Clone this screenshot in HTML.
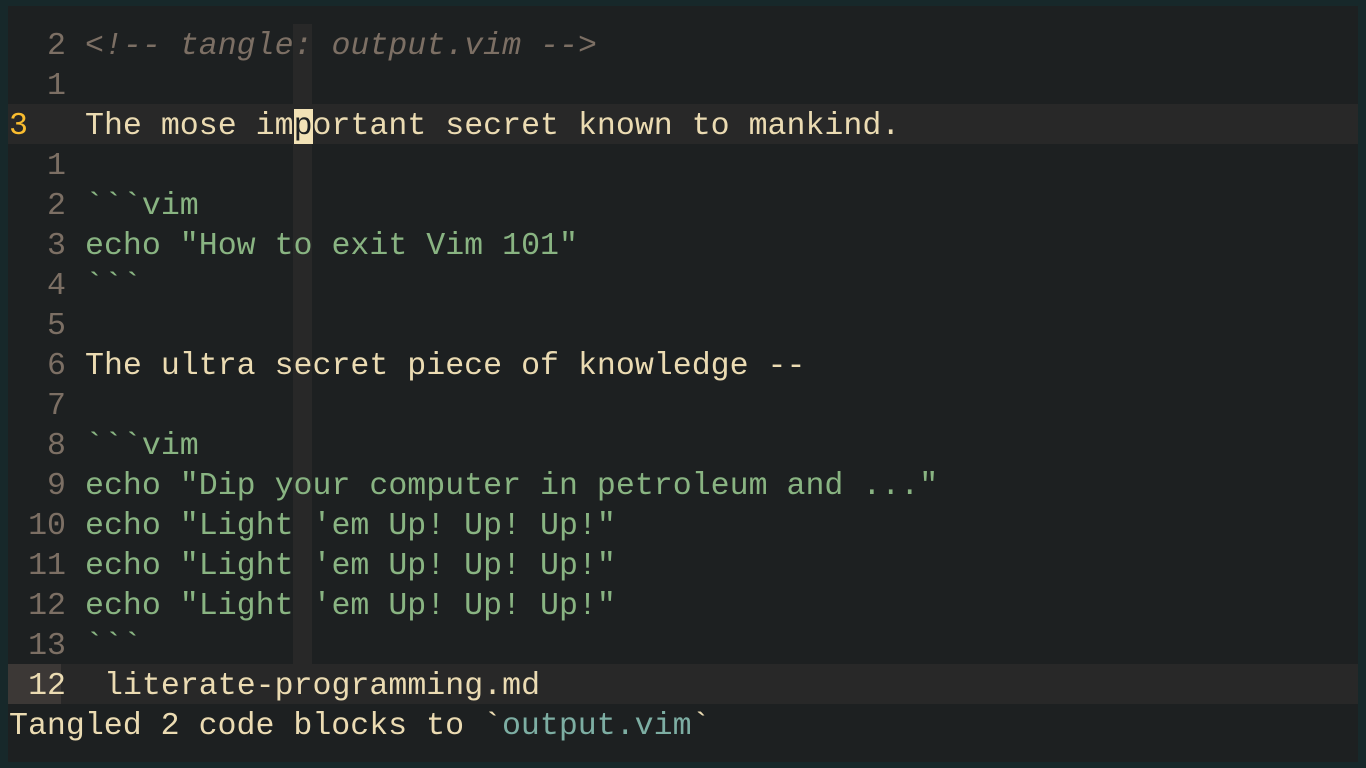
<!DOCTYPE html>
<html><head><meta charset="utf-8"><style>
html,body{margin:0;padding:0;width:1366px;height:768px;overflow:hidden;background:#17282a;}
#w{position:absolute;left:8px;top:6px;width:1350px;height:756px;background:#1d2021;}
.r{position:absolute;left:8px;width:1350px;height:40px;line-height:46px;font-family:"Liberation Mono",monospace;font-size:31.6px;white-space:pre;color:#ebdbb2;}
.n{position:absolute;left:1px;width:57px;text-align:right;color:#7c6f64;}
.t{position:absolute;left:77px;}
.g{color:#89b482}
.c{color:#7c6f64;font-style:italic}
#cc{position:absolute;left:293px;top:24px;width:19px;height:640px;background:#282828;}
</style></head><body>
<div id="w"></div>
<div id="cc"></div>
<div class="r" style="top:24px"><span class="n">2</span><span class="t c">&lt;!-- tangle: output.vim --&gt;</span></div>
<div class="r" style="top:64px"><span class="n">1</span></div>
<div class="r" style="top:104px;background:#282828"><span class="n" style="text-align:left;color:#fabd2f">3</span><span class="t">The mose im<span style="background:#f2e2b6;color:#1d2021">p</span>ortant secret known to mankind.</span></div>
<div class="r" style="top:144px"><span class="n">1</span></div>
<div class="r" style="top:184px"><span class="n">2</span><span class="t g">&#96;&#96;&#96;vim</span></div>
<div class="r" style="top:224px"><span class="n">3</span><span class="t g">echo "How to exit Vim 101"</span></div>
<div class="r" style="top:264px"><span class="n">4</span><span class="t g">&#96;&#96;&#96;</span></div>
<div class="r" style="top:304px"><span class="n">5</span></div>
<div class="r" style="top:344px"><span class="n">6</span><span class="t">The ultra secret piece of knowledge --</span></div>
<div class="r" style="top:384px"><span class="n">7</span></div>
<div class="r" style="top:424px"><span class="n">8</span><span class="t g">&#96;&#96;&#96;vim</span></div>
<div class="r" style="top:464px"><span class="n">9</span><span class="t g">echo "Dip your computer in petroleum and ..."</span></div>
<div class="r" style="top:504px"><span class="n">10</span><span class="t g">echo "Light 'em Up! Up! Up!"</span></div>
<div class="r" style="top:544px"><span class="n">11</span><span class="t g">echo "Light 'em Up! Up! Up!"</span></div>
<div class="r" style="top:584px"><span class="n">12</span><span class="t g">echo "Light 'em Up! Up! Up!"</span></div>
<div class="r" style="top:624px"><span class="n">13</span><span class="t g">&#96;&#96;&#96;</span></div>
<div class="r" style="top:664px;background:#282828"><span style="position:absolute;left:0;width:53px;height:40px;background:#3c3836"></span><span class="n" style="color:#ebdbb2">12</span><span style="position:absolute;left:96px">literate-programming.md</span></div>
<div class="r" style="top:704px"><span style="position:absolute;left:1px">Tangled 2 code blocks to &#96;<span style="color:#7daea3">output.vim</span>&#96;</span></div>
</body></html>
